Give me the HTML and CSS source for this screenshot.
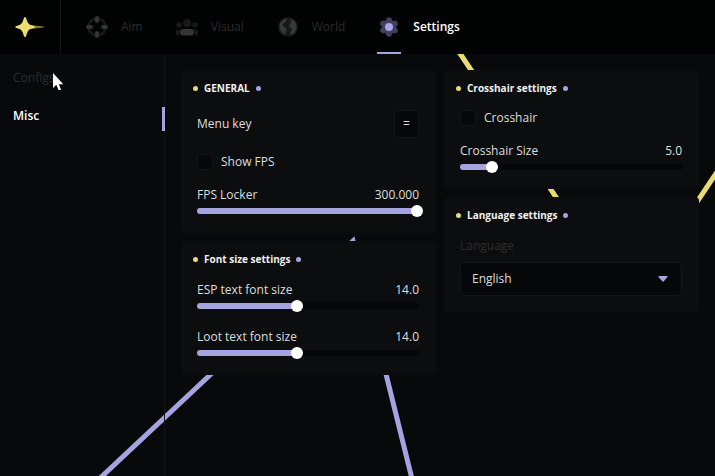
FILE: index.html
```html
<!DOCTYPE html>
<html lang="en">

<head>
    <meta charset="UTF-8">
    <meta name="viewport" content="width=device-width, initial-scale=1.0">
    <title>Settings</title>
    <link rel="stylesheet" href="styles.css">
</head>

<body>
    <!-- Background lines -->
    <svg class="backdrop" viewBox="0 0 715 476" preserveAspectRatio="xMinYMin slice" aria-hidden="true">
        <path class="line-purple" d="M81 496L353 241L418 503" />
        <path class="line-yellow" d="M447 34L628 305L735 145" />
    </svg>

    <header class="header">
        <a class="brand" href="#" aria-label="Home">
            <svg width="30" height="22" viewBox="0 0 30 22">
                <path d="M11 8.500L28.500 10.500Q29.500 11 28.500 11.500L11 13.500Z" fill="#83793f" />
                <path d="M10 1Q11 1 11.300 2.500Q12.500 7.500 15 8.700L19.500 10.200Q20.500 11 19.500 11.800L15 13.300Q12.500 14.500 11.300 19.500Q11 21 10 21Q9 21 8.700 19.500Q7.500 14.500 5 13.300L.8 11.800Q-.2 11 .8 10.200L5 8.700Q7.500 7.500 8.700 2.500Q9 1 10 1Z" fill="#ecdc72" />
            </svg>
        </a>
        <nav class="tabs">
            <a class="tab" href="#aim">
                <svg width="24" height="24" viewBox="0 0 24 24">
                    <circle cx="12" cy="12" r="8.500" fill="none" stroke="#181919" stroke-width="3" />
                    <g fill="#343535">
                        <rect x="10" y="1" width="4" height="7" rx="2" />
                        <rect x="10" y="16" width="4" height="7" rx="2" />
                        <rect x="1" y="10" width="7" height="4" rx="2" />
                        <rect x="16" y="10" width="7" height="4" rx="2" />
                    </g>
                </svg>
                Aim
            </a>
            <a class="tab" href="#visual">
                <svg width="24" height="24" viewBox="0 0 24 24">
                    <g fill="#181919">
                        <circle cx="12" cy="8" r="4" />
                        <circle cx="4" cy="10" r="2.800" />
                        <circle cx="20" cy="10" r="2.800" />
                        <path d="M1 16.500Q1 14.500 3 14.500H6Q4 16 4 20.500H3Q1 20.500 1 18.500Z" />
                        <path d="M23 16.500Q23 14.500 21 14.500H18Q20 16 20 20.500H21Q23 20.500 23 18.500Z" />
                    </g>
                    <rect x="5" y="14" width="14" height="6.500" rx="3.250" fill="#343535" />
                </svg>
                Visual
            </a>
            <a class="tab" href="#world">
                <svg width="24" height="24" viewBox="0 0 24 24">
                    <circle cx="12" cy="12" r="10" fill="#181919" />
                    <path d="M10.500 3.500Q4.500 5 3.500 10.500Q3.500 16 7.500 19Q10 20 9.500 17Q12 15.500 9.500 13L6.500 10.500Q6 8.500 8.500 7.500Q11.500 6 10.500 3.500Z" fill="#383939" />
                    <path d="M15 4Q20 6 20.500 11Q20.500 17 15.500 20Q13.500 19 15 16Q17 14 14.500 12.500Q12.500 11 14 9Q16 7 15 4Z" fill="#383939" />
                </svg>
                World
            </a>
            <a class="tab active" href="#settings" aria-current="page">
                <svg width="24" height="24" viewBox="0 0 24 24">
                    <g fill="#413f5c">
                        <circle cx="12" cy="12" r="7.500" />
                        <rect x="9.200" y="2.300" width="5.600" height="19.400" rx="2.500" />
                        <rect x="9.200" y="2.300" width="5.600" height="19.400" rx="2.500" transform="rotate(60 12 12)" />
                        <rect x="9.200" y="2.300" width="5.600" height="19.400" rx="2.500" transform="rotate(120 12 12)" />
                    </g>
                    <circle cx="12" cy="12" r="4" fill="#a7a6e6" />
                </svg>
                Settings
            </a>
        </nav>
    </header>

    <div class="layout">
        <nav class="sidebar">
            <a class="side-link" href="#configs">Configs</a>
            <a class="side-link active" href="#misc" aria-current="page">Misc</a>
        </nav>

        <main class="content">
            <div class="column">
                <section class="panel">
                    <h2 class="panel-title">GENERAL</h2>
                    <div class="row">
                        <label for="menuKey">Menu key</label>
                        <button class="key-button" id="menuKey" type="button">=</button>
                    </div>
                    <label class="check">
                        <input type="checkbox">
                        Show FPS
                    </label>
                    <div class="slider">
                        <div class="slider-head">
                            <label for="fpsLocker">FPS Locker</label>
                            <output for="fpsLocker">300.000</output>
                        </div>
                        <input type="range" id="fpsLocker" min="0" max="300" value="300" style="--fill: 97%">
                    </div>
                </section>

                <section class="panel">
                    <h2 class="panel-title">Font size settings</h2>
                    <div class="slider">
                        <div class="slider-head">
                            <label for="espSize">ESP text font size</label>
                            <output for="espSize">14.0</output>
                        </div>
                        <input type="range" id="espSize" min="3" max="28" value="14" style="--fill: 44%">
                    </div>
                    <div class="slider">
                        <div class="slider-head">
                            <label for="lootSize">Loot text font size</label>
                            <output for="lootSize">14.0</output>
                        </div>
                        <input type="range" id="lootSize" min="3" max="28" value="14" style="--fill: 44%">
                    </div>
                </section>
            </div>

            <div class="column">
                <section class="panel">
                    <h2 class="panel-title">Crosshair settings</h2>
                    <label class="check">
                        <input type="checkbox">
                        Crosshair
                    </label>
                    <div class="slider">
                        <div class="slider-head">
                            <label for="crosshairSize">Crosshair Size</label>
                            <output for="crosshairSize">5.0</output>
                        </div>
                        <input type="range" id="crosshairSize" min="1" max="34" value="5" style="--fill: 12%">
                    </div>
                </section>

                <section class="panel">
                    <h2 class="panel-title">Language settings</h2>
                    <div class="field">
                        <label class="muted" for="language">Language</label>
                        <div class="select">
                            <select id="language">
                                <option>English</option>
                            </select>
                            <svg class="select-arrow" width="10" height="6" viewBox="0 0 10 6">
                                <path d="M1 0H9Q10 0 9.500 1L5.500 5.500Q5 6 4.500 5.500L.5 1Q0 0 1 0Z" fill="#a5a4e1" />
                            </svg>
                        </div>
                    </div>
                </section>
            </div>
        </main>
    </div>

    <!-- Mouse pointer -->
    <svg class="cursor" width="12" height="20" viewBox="0 0 12 20" aria-hidden="true">
        <path d="M1 1V16L4.300 12.800L6.500 18H9L7 12.300H11.300Z" fill="#fff" />
    </svg>
</body>

</html>
```

FILE: styles.css
```css
* {
    box-sizing: border-box;
}

:root {
    --purple: #a5a4e1;
    --yellow: #e9da76;
    --text: #dededf;
    --muted: #2c2d2e;
    --line: #141517;
    --inset: #070809;
}

body {
    margin: 0;
    min-height: 100vh;
    display: flex;
    flex-direction: column;
    background-color: #07090b;
    color: var(--text);
    font-family: "Open Sans", "Noto Sans", sans-serif;
    font-size: 12px;
    font-weight: 500;
    line-height: 18px;
}

a {
    color: inherit;
    text-decoration: none;
}

.backdrop {
    position: absolute;
    top: 0;
    left: 0;
    width: 100%;
    height: 100%;
    z-index: -1;
}

.backdrop path {
    fill: none;
    stroke-width: 5px;
}

.line-purple {
    stroke: var(--purple);
}

.line-yellow {
    stroke: var(--yellow);
}

/* Header */
.header {
    display: flex;
    height: 54px;
    background-color: #010202;
}

.brand {
    width: 61px;
    display: flex;
    align-items: center;
    justify-content: center;
    border-right: 1px solid var(--line);
}

.tabs {
    display: flex;
    gap: 32px;
    padding: 0 24px;
}

.tab {
    display: flex;
    align-items: center;
    gap: 12px;
    color: var(--muted);
}

.tab.active {
    color: #fff;
    font-weight: 600;
    background: linear-gradient(var(--purple), var(--purple)) left bottom / 24px 2px no-repeat;
}

/* Page */
.layout {
    flex: 1;
    display: flex;
}

.sidebar {
    width: 165px;
    display: flex;
    flex-direction: column;
    gap: 14px;
    padding-top: 15px;
    border-right: 1px solid var(--line);
}

.side-link {
    height: 24px;
    padding: 0 13px 6px;
    color: var(--muted);
}

.side-link.active {
    margin-right: -1px;
    color: #fff;
    font-weight: 600;
    border-right: 3px solid var(--purple);
    border-radius: 2px 0 0 2px;
}

.content {
    flex: 1;
    display: grid;
    grid-template-columns: 1fr 1fr;
    align-items: start;
    gap: 8px;
    padding: 16px;
}

.column {
    display: flex;
    flex-direction: column;
    gap: 8px;
}

.panel {
    display: flex;
    flex-direction: column;
    gap: 16px;
    padding: 10px 17px 16px 16px;
    background-color: #0c0d0f;
    border-radius: 4px;
}

.panel-title {
    display: flex;
    align-items: center;
    gap: 6px;
    margin: 0 -4px -2px;
    color: #f0f0f0;
    font-size: 10px;
    font-weight: 700;
    line-height: 16px;
}

.panel-title::before,
.panel-title::after {
    content: "";
    width: 5px;
    height: 5px;
    border-radius: 50%;
    background-color: var(--yellow);
}

.panel-title::after {
    background-color: var(--purple);
}

.row,
.slider-head {
    display: flex;
    align-items: center;
    justify-content: space-between;
}

.key-button {
    width: 25px;
    height: 28px;
    padding: 0;
    color: inherit;
    font: inherit;
    background-color: var(--inset);
    border: 1px solid var(--line);
    border-radius: 4px;
}

.check {
    display: flex;
    align-items: center;
    gap: 8px;
    line-height: 16px;
}

.check input {
    appearance: none;
    width: 16px;
    height: 16px;
    margin: 0;
    background-color: var(--inset);
    border: 1px solid var(--line);
    border-radius: 3px;
}

.check input:checked {
    background-color: var(--purple);
}

/* Sliders */
.slider {
    display: flex;
    flex-direction: column;
    gap: 1px;
}

/* the thumb runs a little past the end of the track */
.slider input {
    appearance: none;
    height: 12px;
    margin: 0 -4px 0 0;
    background: none;
}

.slider input::-webkit-slider-runnable-track {
    height: 6px;
    border-radius: 3px;
    background: linear-gradient(to right, var(--purple) var(--fill), #060708 var(--fill)) left / calc(100% - 4px) 6px no-repeat;
}

.slider input::-webkit-slider-thumb {
    appearance: none;
    width: 12px;
    height: 12px;
    margin-top: -3px;
    border-radius: 50%;
    background-color: #fff;
}

/* Drop-down */
.field {
    display: flex;
    flex-direction: column;
    gap: 7px;
}

.muted {
    color: var(--muted);
}

.select {
    display: grid;
    align-items: center;
}

.select select,
.select-arrow {
    grid-area: 1 / 1;
}

.select select {
    appearance: none;
    width: 100%;
    height: 34px;
    padding: 0 11px;
    color: inherit;
    font: inherit;
    background-color: var(--inset);
    border: 1px solid var(--line);
    border-radius: 4px;
}

.select-arrow {
    justify-self: end;
    margin-right: 14px;
    pointer-events: none;
}

.cursor {
    position: absolute;
    top: 72px;
    left: 52px;
}
```
